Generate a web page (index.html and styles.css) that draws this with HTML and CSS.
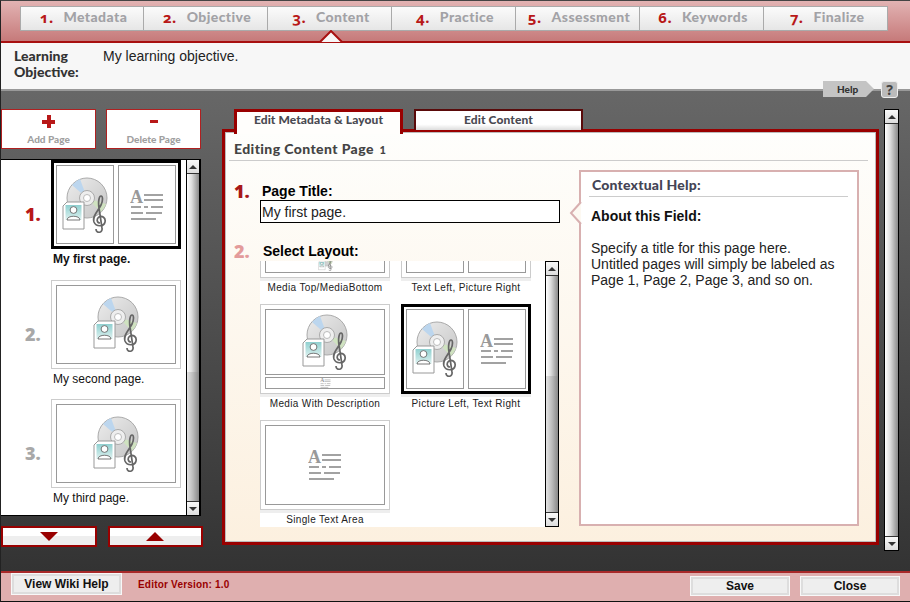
FILE: index.html
```html
<!DOCTYPE html>
<html lang="en">
<head>
    <meta charset="UTF-8">
    <title>Content Editor</title>
    <link rel="stylesheet" href="styles.css">
</head>
<body>
    <svg class="defs" width="0" height="0">
        <defs>
            <linearGradient id="discFill" x1="0" y1="0" x2="1" y2="1">
                <stop offset="0" stop-color="#ececec"/>
                <stop offset="1" stop-color="#c4c4c4"/>
            </linearGradient>
            <linearGradient id="photoFill" x1="0" y1="0" x2="0" y2="1">
                <stop offset="0" stop-color="#8fd0d0"/>
                <stop offset="1" stop-color="#dff2f0"/>
            </linearGradient>
            <symbol id="mediaIcon" viewBox="0 0 46 56">
                <circle cx="25" cy="21" r="20" fill="url(#discFill)" stroke="#aaa"/>
                <path d="M25 21 L10 8 A20 20 0 0 1 18 2 Z" fill="#bcd6ee"/>
                <path d="M25 21 L44 27 A20 20 0 0 1 39 35 Z" fill="#cfe2c0"/>
                <circle cx="25" cy="21" r="7.5" fill="#eee" stroke="#aaa"/>
                <circle cx="25" cy="21" r="3.5" fill="#fff" stroke="#bbb"/>
                <path d="M5 25 H22 V52 H1 V29 Z" fill="#fff" stroke="#999"/>
                <rect x="3.5" y="28" width="16" height="15" fill="url(#photoFill)"/>
                <circle cx="11.5" cy="33" r="3.4" fill="#fff" stroke="#555" stroke-width=".8"/>
                <path d="M5 43 C5 38 18 38 18 43 Z" fill="#fff" stroke="#555" stroke-width=".8"/>
                <path d="M38 46 C35 46 34 42 37 40 C40 38 44 41 43 45 C42 50 34 50 32 45 C30 39 36 34 39 28 C41 24 41 19 39 19 C37 19 36 25 37 31 L40 51 C41 56 34 57 34 52" fill="none" stroke="#666" stroke-width="1.7"/>
            </symbol>
            <symbol id="textIcon" viewBox="0 0 34 32">
                <text x="0" y="14" class="icon-letter">A</text>
                <path d="M14 6 H33 M14 11 H33 M1 18 H11 M14 18 H18 M21 18 H33 M1 24 H13 M16 24 H32 M1 30 H26" stroke="#a2a2a2" stroke-width="2" fill="none"/>
            </symbol>
        </defs>
    </svg>

    <div class="app">
        <nav class="steps">
            <a class="step"><b>1.</b>Metadata</a>
            <a class="step"><b>2.</b>Objective</a>
            <a class="step"><b>3.</b>Content</a>
            <a class="step"><b>4.</b>Practice</a>
            <a class="step"><b>5.</b>Assessment</a>
            <a class="step"><b>6.</b>Keywords</a>
            <a class="step"><b>7.</b>Finalize</a>
            <svg class="step-pointer" width="24" height="13" viewBox="0 0 24 13">
                <path d="M1 12 L12 1 L23 12" fill="#f7f7f7" stroke="#a81010" stroke-width="2"/>
            </svg>
        </nav>

        <section class="objective">
            <div class="objective-label">Learning<br>Objective:</div>
            <div class="objective-text">My learning objective.</div>
            <div class="help-links">
                <span class="help-tag">Help</span>
                <span class="help-mark">?</span>
            </div>
        </section>

        <main class="workspace">
            <aside class="sidebar">
                <div class="page-actions">
                    <button class="action-btn"><span class="action-sign plus"></span>Add Page</button>
                    <button class="action-btn"><span class="action-sign minus"></span>Delete Page</button>
                </div>

                <div class="page-list">
                    <div class="page-items">
                        <div class="page-item">
                            <span class="page-num current">1.</span>
                            <div class="page-card">
                                <div class="thumb selected">
                                    <div class="pane"><svg class="icon-media"><use href="#mediaIcon"/></svg></div>
                                    <div class="pane"><svg class="icon-text"><use href="#textIcon"/></svg></div>
                                </div>
                                <div class="page-name strong">My first page.</div>
                            </div>
                        </div>
                        <div class="page-item">
                            <span class="page-num">2.</span>
                            <div class="page-card">
                                <div class="thumb">
                                    <div class="pane"><svg class="icon-media"><use href="#mediaIcon"/></svg></div>
                                </div>
                                <div class="page-name">My second page.</div>
                            </div>
                        </div>
                        <div class="page-item">
                            <span class="page-num">3.</span>
                            <div class="page-card">
                                <div class="thumb">
                                    <div class="pane"><svg class="icon-media"><use href="#mediaIcon"/></svg></div>
                                </div>
                                <div class="page-name">My third page.</div>
                            </div>
                        </div>
                    </div>
                    <div class="scrollbar">
                        <span class="sb-btn up"></span>
                        <span class="sb-thumb list-thumb"></span>
                        <span class="sb-track"></span>
                        <span class="sb-btn down"></span>
                    </div>
                </div>

                <div class="move-actions">
                    <button class="move-btn"><span class="tri tri-down"></span></button>
                    <button class="move-btn"><span class="tri tri-up"></span></button>
                </div>
            </aside>

            <div class="editor">
                <div class="editor-tabs">
                    <a class="editor-tab active">Edit Metadata &amp; Layout</a>
                    <a class="editor-tab">Edit Content</a>
                </div>
                <div class="panel">
                    <h2 class="panel-title">Editing Content Page <small>1</small></h2>
                    <div class="panel-body">
                        <div class="form">
                            <div class="field-head">
                                <span class="field-num">1.</span>
                                <label class="field-label">Page Title:</label>
                            </div>
                            <input class="title-input" type="text" value="My first page.">
                            <div class="field-head layout-head">
                                <span class="field-num faded">2.</span>
                                <label class="field-label">Select Layout:</label>
                            </div>
                            <div class="layout-picker">
                                <div class="layout-scroll">
                                    <div class="layout-grid">
                                        <div class="layout">
                                            <div class="thumb stacked">
                                                <div class="pane"></div>
                                                <div class="pane pane-bottom tall"><svg class="icon-mini"><use href="#mediaIcon"/></svg></div>
                                            </div>
                                            <div class="layout-name">Media Top/MediaBottom</div>
                                        </div>
                                        <div class="layout">
                                            <div class="thumb">
                                                <div class="pane"></div>
                                                <div class="pane"></div>
                                            </div>
                                            <div class="layout-name">Text Left, Picture Right</div>
                                        </div>
                                        <div class="layout">
                                            <div class="thumb stacked">
                                                <div class="pane"><svg class="icon-media"><use href="#mediaIcon"/></svg></div>
                                                <div class="pane pane-bottom"><svg class="icon-tiny"><use href="#textIcon"/></svg></div>
                                            </div>
                                            <div class="layout-name">Media With Description</div>
                                        </div>
                                        <div class="layout">
                                            <div class="thumb selected">
                                                <div class="pane"><svg class="icon-media"><use href="#mediaIcon"/></svg></div>
                                                <div class="pane"><svg class="icon-text"><use href="#textIcon"/></svg></div>
                                            </div>
                                            <div class="layout-name">Picture Left, Text Right</div>
                                        </div>
                                        <div class="layout">
                                            <div class="thumb">
                                                <div class="pane"><svg class="icon-text"><use href="#textIcon"/></svg></div>
                                            </div>
                                            <div class="layout-name">Single Text Area</div>
                                        </div>
                                    </div>
                                </div>
                                <div class="scrollbar framed">
                                    <span class="sb-btn up"></span>
                                    <span class="sb-thumb layout-thumb"></span>
                                    <span class="sb-track"></span>
                                    <span class="sb-btn down"></span>
                                </div>
                            </div>
                        </div>

                        <div class="context-help">
                            <h3 class="context-title">Contextual Help:</h3>
                            <h4 class="context-sub">About this Field:</h4>
                            <p class="context-text">Specify a title for this page here.<br>Untitled pages will simply be labeled as<br>Page 1, Page 2, Page 3, and so on.</p>
                            <svg class="context-beak" width="13" height="24" viewBox="0 0 13 24">
                                <path d="M12 1 L2 12 L12 23" fill="#fdf9f2" stroke="#d8b0b0" stroke-width="2"/>
                            </svg>
                        </div>
                    </div>
                </div>
            </div>

            <div class="scrollbar framed page-scroll">
                <span class="sb-btn up"></span>
                <span class="sb-thumb"></span>
                <span class="sb-btn down"></span>
            </div>
        </main>

        <footer class="footer">
            <button class="foot-btn wiki">View Wiki Help</button>
            <span class="version">Editor Version: 1.0</span>
            <button class="foot-btn save">Save</button>
            <button class="foot-btn">Close</button>
        </footer>
    </div>
</body>
</html>
```

FILE: styles.css
```css
* {
    margin: 0;
    padding: 0;
    box-sizing: border-box;
}

body {
    width: 910px;
    height: 602px;
    overflow: hidden;
    background: #fff;
    font-family: "Liberation Sans", Arial, sans-serif;
}

.defs {
    position: absolute;
}

.icon-letter {
    font-family: "Liberation Serif", serif;
    font-weight: bold;
    font-size: 18px;
    fill: #999;
}

.app {
    width: 910px;
    height: 602px;
    display: flex;
    flex-direction: column;
    border-top: 1px solid #444;
    border-left: 1px solid #222;
    border-bottom: 1px solid #111;
}

/* top steps */
.steps {
    position: relative;
    flex: none;
    height: 42px;
    display: flex;
    padding: 5px 0 0 19px;
    background: linear-gradient(#e2b3b3, #c67a7a);
    border-bottom: 2px solid #a81010;
}

.step {
    width: 124px;
    height: 25px;
    display: flex;
    align-items: center;
    justify-content: center;
    padding: 0 0 4px 3px;
    background: linear-gradient(#fbfbfb, #e6e6e6);
    border: 1px solid #aaa;
    border-left: 0;
    color: #a2a2a6;
    font-family: Lato, sans-serif;
    font-size: 14px;
    font-weight: 900;
    letter-spacing: .4px;
}

.step:first-child {
    border-left: 1px solid #aaa;
}

.step b {
    margin-right: 10px;
    color: #b81818;
    font-family: "Noto Sans", sans-serif;
    font-variant-numeric: oldstyle-nums;
    font-size: 15px;
    font-weight: 700;
}

.step-pointer {
    position: absolute;
    left: 318px;
    top: 29px;
}

/* objective band */
.objective {
    position: relative;
    flex: none;
    height: 48px;
    display: flex;
    padding: 5px 0 0 13px;
    background: #f7f7f7;
    border-bottom: 2px solid #999;
}

.objective-label {
    width: 89px;
    color: #333;
    font-family: Lato, sans-serif;
    font-size: 14px;
    font-weight: 900;
    line-height: 16px;
}

.objective-text {
    color: #222;
    font-size: 14px;
    line-height: 16px;
}

.help-links {
    position: absolute;
    right: 12px;
    top: 38px;
    display: flex;
    gap: 7px;
}

.help-tag {
    width: 51px;
    height: 16px;
    padding-left: 14px;
    background: #c4c4c4;
    clip-path: polygon(0 0, 43px 0, 100% 50%, 43px 100%, 0 100%);
    color: #333;
    font-family: Lato, sans-serif;
    font-size: 10px;
    font-weight: 900;
    line-height: 17px;
}

.help-mark {
    width: 17px;
    height: 17px;
    border: 1px solid #eee;
    border-radius: 3px;
    background: #bbb;
    color: #444;
    font-family: "Noto Sans", sans-serif;
    font-size: 14px;
    font-weight: 700;
    line-height: 15px;
    text-align: center;
}

/* dark work area */
.workspace {
    flex: 1;
    min-height: 0;
    display: flex;
    padding-top: 18px;
    background: linear-gradient(#676767, #333);
}

.sidebar {
    width: 202px;
    flex: none;
}

.page-actions {
    display: flex;
    gap: 10px;
}

.action-btn {
    width: 95px;
    height: 40px;
    display: flex;
    flex-direction: column;
    align-items: center;
    padding-top: 5px;
    background: #fff;
    border: 1px solid #b02020;
    color: #a0a0a0;
    font-family: Lato, sans-serif;
    font-size: 10px;
    font-weight: 900;
}

.action-sign {
    width: 13px;
    height: 13px;
    margin-bottom: 5px;
}

.action-sign.plus {
    background:
        linear-gradient(#b81818, #b81818) center / 13px 4px no-repeat,
        linear-gradient(#b81818, #b81818) center / 4px 13px no-repeat;
}

.action-sign.minus {
    background: linear-gradient(#b81818, #b81818) center / 8px 3px no-repeat;
}

.page-list {
    width: 200px;
    height: 357px;
    margin-top: 10px;
    display: flex;
    background: #fff;
    border-top: 1px solid #000;
    border-bottom: 1px solid #000;
    border-right: 1px solid #000;
}

.page-items {
    flex: 1;
    display: flex;
    flex-direction: column;
    gap: 10.5px;
}

.page-item {
    height: 109px;
    display: flex;
    align-items: center;
}

.page-num {
    width: 50px;
    padding: 0 0 1px 24px;
    color: #a8a8a8;
    font-family: "Noto Sans", sans-serif;
    font-size: 18px;
    font-weight: 900;
}

.page-num.current {
    color: #b81818;
}

.page-card {
    width: 130px;
}

.page-name {
    height: 20px;
    padding: 2px 0 0 2px;
    color: #111;
    font-size: 12px;
    line-height: 16px;
}

.page-name.strong {
    font-weight: bold;
}

.thumb {
    width: 130px;
    height: 89px;
    display: flex;
    gap: 4px;
    padding: 4px;
    background: #fff;
    border: 1px solid #ccc;
}

.thumb.selected {
    padding: 2px;
    border: 3px solid #000;
}

.thumb.stacked {
    flex-direction: column;
    gap: 2px;
}

.pane {
    flex: 1;
    min-height: 0;
    display: flex;
    align-items: center;
    justify-content: center;
    overflow: hidden;
    border: 1px solid #999;
}

.pane-bottom {
    flex: none;
    height: 12px;
}

.pane-bottom.tall {
    height: 22px;
}

.icon-media {
    width: 46px;
    height: 56px;
}

.icon-text {
    width: 34px;
    height: 32px;
}

.icon-mini {
    width: 15px;
    height: 18px;
}

.icon-tiny {
    width: 11px;
    height: 10px;
}

/* custom scrollbars */
.scrollbar {
    flex: none;
    width: 14px;
    display: flex;
    flex-direction: column;
    border-left: 1px solid #000;
    border-right: 1px solid #000;
}

.scrollbar.framed {
    border-top: 1px solid #000;
    border-bottom: 1px solid #000;
}

.sb-btn {
    flex: none;
    height: 14px;
    display: flex;
    align-items: center;
    justify-content: center;
    background: linear-gradient(#f8f8f8, #ddd);
}

.sb-btn.up {
    border-bottom: 1px solid #333;
}

.sb-btn.down {
    border-top: 1px solid #333;
}

.sb-btn::after {
    content: "";
    border-left: 4px solid transparent;
    border-right: 4px solid transparent;
}

.sb-btn.up::after {
    border-bottom: 4px solid #333;
}

.sb-btn.down::after {
    border-top: 4px solid #333;
}

.sb-thumb {
    flex: 1;
    background: linear-gradient(90deg, #fff, #ddd 40%, #8a8a8a);
}

.sb-track {
    flex: 1;
    background: linear-gradient(90deg, #e4e4e4, #bbb 50%, #888);
}

.list-thumb {
    flex: none;
    height: 198px;
}

.layout-thumb {
    flex: none;
    height: 100px;
}

.move-actions {
    display: flex;
    gap: 11px;
    margin-top: 10px;
}

.move-btn {
    width: 96px;
    height: 21px;
    display: flex;
    align-items: center;
    justify-content: center;
    background: linear-gradient(#fff 45%, #eee 45%);
    border: 2px solid #900;
}

.tri {
    border-left: 9px solid transparent;
    border-right: 9px solid transparent;
}

.tri-down {
    border-top: 9px solid #900;
}

.tri-up {
    border-bottom: 9px solid #900;
}

/* editor */
.editor {
    width: 657px;
    flex: none;
    margin-left: 19px;
    display: flex;
    flex-direction: column;
}

.editor-tabs {
    position: relative;
    z-index: 1;
    height: 24px;
    display: flex;
    gap: 11px;
    padding-left: 12px;
    margin-bottom: -4px;
}

.editor-tab {
    width: 169px;
    height: 21px;
    background: linear-gradient(#fff 70%, #ddd);
    border: 2px solid #5a0a0a;
    border-bottom: 0;
    color: #4a4a52;
    font-family: Lato, sans-serif;
    font-size: 12px;
    font-weight: 900;
    letter-spacing: .1px;
    line-height: 17px;
    text-align: center;
}

.editor-tab.active {
    height: 25px;
    background: #fffefc;
    border: 3px solid #900;
    border-bottom: 0;
    line-height: 16px;
}

.panel {
    height: 416px;
    display: flex;
    flex-direction: column;
    padding: 0 8px 0 4px;
    background: linear-gradient(#fefefc, #fcf0df);
    border: 3px solid #900;
    outline: 1px solid #bbb;
    outline-offset: -4px;
}

.panel-title {
    flex: none;
    height: 29px;
    padding: 8px 0 0 5px;
    border-bottom: 1px solid #ccc;
    color: #444;
    font-family: Lato, sans-serif;
    font-size: 14px;
    font-weight: 900;
    letter-spacing: .4px;
    line-height: 18px;
}

.panel-title small {
    font-size: 11px;
    margin-left: 2px;
}

.panel-body {
    flex: 1;
    display: flex;
}

/* form column */
.form {
    width: 350px;
    flex: none;
    padding: 21px 0 0 5px;
}

.field-head {
    display: flex;
    align-items: center;
    height: 18px;
}

.field-num {
    width: 28px;
    color: #a81818;
    font-family: "Noto Sans", sans-serif;
    font-size: 18px;
    font-weight: 900;
    line-height: 18px;
}

.field-num.faded {
    color: #e39b9b;
}

.field-label {
    color: #000;
    font-family: "Liberation Sans", Arial, sans-serif;
    font-size: 14px;
    font-weight: 700;
}

.layout-head .field-label {
    margin-left: 1px;
}

.title-input {
    display: block;
    width: 300px;
    height: 23px;
    margin-left: 26px;
    padding-left: 1px;
    background: #fff;
    border: 1px solid #000;
    border-radius: 0;
    outline: 0;
    color: #222;
    font-family: "Liberation Sans", Arial, sans-serif;
    font-size: 14px;
}

.layout-head {
    margin-top: 19px;
}

.layout-picker {
    width: 299px;
    height: 266px;
    margin: 1px 0 0 26px;
    display: flex;
}

.layout-scroll {
    flex: 1;
    overflow: hidden;
    background: #fff;
}

.layout-grid {
    display: grid;
    grid-template-columns: 130px 130px;
    grid-auto-rows: 116px;
    column-gap: 11px;
    margin-top: -73px;
}

.layout .thumb {
    height: 90px;
    box-shadow: 0 3px 0 #eee;
}

.layout-name {
    padding-top: 3px;
    color: #222;
    font-size: 10px;
    letter-spacing: .35px;
    line-height: 14px;
    text-align: center;
}

/* contextual help box */
.context-help {
    position: relative;
    width: 280px;
    height: 356px;
    margin-top: 9px;
    padding: 5px 9px 0 8px;
    background: #fff;
    border: 2px solid #d8b0b0;
}

.context-title {
    height: 20px;
    padding-left: 3px;
    border-bottom: 1px solid #ccc;
    color: #445;
    font-family: Lato, sans-serif;
    font-size: 14px;
    font-weight: 900;
    letter-spacing: .2px;
    line-height: 16px;
}

.context-sub {
    margin: 11px 0 16px 2px;
    color: #111;
    font-size: 14px;
    line-height: 16px;
}

.context-text {
    margin-left: 2px;
    color: #222;
    font-size: 14px;
    line-height: 16px;
}

.context-beak {
    position: absolute;
    left: -12px;
    top: 29px;
}

.page-scroll {
    width: 15px;
    height: 442px;
    margin-left: 5px;
}

/* footer */
.footer {
    flex: none;
    height: 30px;
    display: flex;
    align-items: flex-start;
    padding: 0 10px;
    background: #dfafaf;
    border-top: 2px solid #a82a2a;
}

.foot-btn {
    width: 100px;
    height: 20px;
    margin-top: 3px;
    background: #eee;
    border: 1px solid #f8f8f8;
    box-shadow: inset 0 0 0 2px #ddd;
    color: #111;
    font-family: "Liberation Sans", Arial, sans-serif;
    font-size: 12px;
    font-weight: bold;
}

.foot-btn.wiki {
    width: 111px;
    height: 22px;
    margin-top: 0;
}

.foot-btn.save {
    margin-right: 10px;
}

.version {
    flex: 1;
    margin: 6px 0 0 16px;
    color: #900;
    font-size: 10px;
    font-weight: bold;
    letter-spacing: .2px;
}
```
